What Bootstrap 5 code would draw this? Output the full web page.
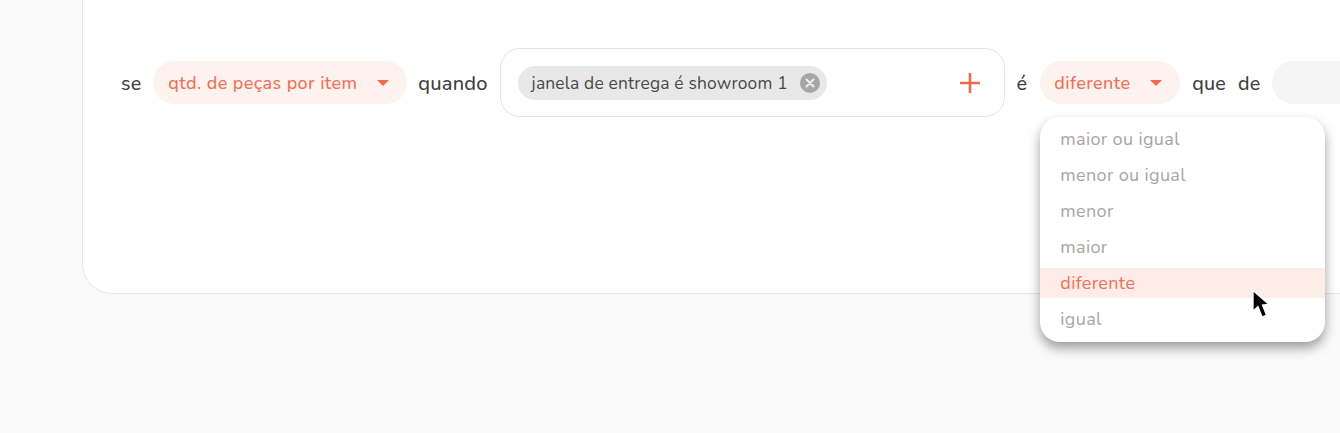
<!DOCTYPE html>
<html lang="pt">
<head>
<meta charset="utf-8">
<title>Regra</title>
<link href="https://cdn.jsdelivr.net/npm/bootstrap@5.3.0/dist/css/bootstrap.min.css" rel="stylesheet">
<style>
html,body{height:433px;overflow:hidden;background:#fafafa;}
body{font-family:"Nunito","Lato","Noto Sans",sans-serif;color:#3f3f3f;position:relative;display:flow-root;}
.stage{margin:-40px -60px 0 82px;height:334px;background:#fff;border:1px solid #e6e6e6;border-radius:0 0 0 30px;padding:87px 0 0 38px;}
.rule-row{height:69px;white-space:nowrap;}
.word{font-size:19.7px;font-weight:500;letter-spacing:.15px;line-height:1;padding-top:2px;}
.word-long{font-size:20px;letter-spacing:.2px;margin-left:11px;margin-right:12px;}
.word-e{margin-left:12px;margin-right:13px;}
.word-que{margin-left:12px;margin-right:12px;}
.pill-sel{height:43px;border-radius:22px;background:#fef2ef;color:#ee7157;font-size:18px;font-weight:500;letter-spacing:.4px;padding:1px 18px 0 15px;}
.pill-sel.wide{width:254px;}
.pill-sel.mid{width:140px;padding-left:14px;}
.pill-sel.empty{width:110px;background:#f5f5f5;}
.caret-mark{width:0;height:0;border-left:6px solid transparent;border-right:6px solid transparent;border-top:6px solid #f0694a;}
.empty .caret-mark{border-top-color:#999;}
.tag-box{width:505px;height:69px;background:#fff;border:1.5px solid #e4e4e4;border-radius:20px;padding:0 22px 0 17px;}
.tag-chip{height:34px;width:309px;border-radius:17px;background:#e8e8e8;padding:1px 7px 0 14px;font-size:17.4px;letter-spacing:.17px;color:#484848;justify-content:space-between;}
.tag-chip svg{margin-top:-1px;}
.menu-anchor{width:140px;}
.menu-panel{display:block;top:56px;left:0;width:285px;height:225px;margin:0;border:0;border-radius:20px;padding:7px 0 0;box-shadow:0 6px 12px rgba(0,0,0,.38);}
.menu-panel .dropdown-item{height:30px;margin-bottom:6px;padding:0 20px;font-size:18px;line-height:30px;color:#a6a6a6;letter-spacing:.35px;}
.menu-panel .dropdown-item.active{background:#fdece8;color:#ee7157;}
.pointer-mark{position:absolute;left:1251px;top:289px;width:20px;height:32px;z-index:1100;}
</style>
</head>
<body>
<div class="stage">
  <div class="rule-row d-flex align-items-center">
    <span class="word me-2 pe-1">se</span>
    <div class="pill-sel wide d-flex align-items-center justify-content-between">
      <span>qtd. de peças por item</span><span class="caret-mark"></span>
    </div>
    <span class="word word-long">quando</span>
    <div class="tag-box d-flex align-items-center justify-content-between">
      <span class="tag-chip d-flex align-items-center">janela de entrega é showroom 1
        <svg width="20" height="20" viewBox="0 0 20 20"><circle cx="10" cy="10" r="10" fill="#a6a6a6"/><path d="M6.5 6.5l7 7M13.5 6.5l-7 7" stroke="#eee" stroke-width="2" stroke-linecap="round"/></svg>
      </span>
      <svg width="24" height="24" viewBox="0 0 24 24"><path d="M12 2v20M2 12h20" stroke="#f0694a" stroke-width="2.6"/></svg>
    </div>
    <span class="word word-e">é</span>
    <div class="menu-anchor position-relative">
      <div class="pill-sel mid d-flex align-items-center justify-content-between">
        <span>diferente</span><span class="caret-mark"></span>
      </div>
      <div class="dropdown-menu menu-panel position-absolute">
        <a class="dropdown-item" href="#">maior ou igual</a>
        <a class="dropdown-item" href="#">menor ou igual</a>
        <a class="dropdown-item" href="#">menor</a>
        <a class="dropdown-item" href="#">maior</a>
        <a class="dropdown-item active" href="#">diferente</a>
        <a class="dropdown-item" href="#">igual</a>
      </div>
    </div>
    <span class="word word-que">que</span>
    <span class="word me-2 pe-1">de</span>
    <div class="pill-sel empty d-flex align-items-center justify-content-end"><span class="caret-mark"></span></div>
  </div>
</div>
<svg class="pointer-mark" viewBox="0 0 20 32"><path d="M2 1.5L2 22L7 17.5L11 28L15.5 26L11.5 16L18 15.5Z" fill="#000" stroke="#fff" stroke-width="1.3"/></svg>
<script src="https://cdn.jsdelivr.net/npm/bootstrap@5.3.0/dist/js/bootstrap.bundle.min.js"></script>
</body>
</html>
